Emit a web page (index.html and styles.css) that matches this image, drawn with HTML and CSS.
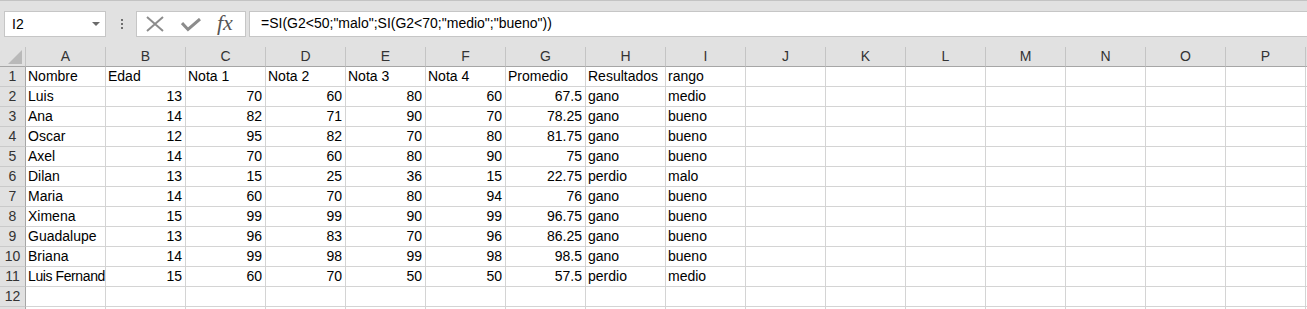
FILE: index.html
```html
<!DOCTYPE html>
<html lang="es">
<head>
<meta charset="utf-8">
<title>Hoja de cálculo</title>
<link rel="stylesheet" href="styles.css">
</head>
<body>
<div class="app">
  <div class="formula-bar">
    <div class="namebox"><span class="ref">I2</span><span class="dd"></span></div>
    <div class="grip"><i></i><i></i><i></i></div>
    <div class="fbtns">
      <svg class="ico-x" width="18" height="16" viewBox="0 0 18 16"><path d="M1 1 L17 15 M17 1 L1 15" stroke="#8c8c8c" stroke-width="2" fill="none"/></svg>
      <svg class="ico-ok" width="20" height="14" viewBox="0 0 20 14"><path d="M1 5 L7 11.5 L19 1" stroke="#8c8c8c" stroke-width="3" fill="none"/></svg>
      <span class="fx">fx</span>
    </div>
    <div class="finput">=SI(G2&lt;50;"malo";SI(G2&lt;70;"medio";"bueno"))</div>
  </div>
  <div class="sheet">
    <div class="row head"><div class="corner"><svg width="14" height="14" viewBox="0 0 14 14"><polygon points="14,0 14,14 0,14" fill="#b9b9b9"/></svg></div><div class="ch">A</div><div class="ch">B</div><div class="ch">C</div><div class="ch">D</div><div class="ch">E</div><div class="ch">F</div><div class="ch">G</div><div class="ch">H</div><div class="ch">I</div><div class="ch">J</div><div class="ch">K</div><div class="ch">L</div><div class="ch">M</div><div class="ch">N</div><div class="ch">O</div><div class="ch">P</div><div class="ch"></div></div>
    <div class="row"><div class="rh">1</div><div class="c">Nombre</div><div class="c">Edad</div><div class="c">Nota 1</div><div class="c">Nota 2</div><div class="c">Nota 3</div><div class="c">Nota 4</div><div class="c">Promedio</div><div class="c">Resultados</div><div class="c">rango</div><i></i><i></i><i></i><i></i><i></i><i></i><i></i><i></i></div>
    <div class="row"><div class="rh">2</div><div class="c">Luis</div><div class="c n">13</div><div class="c n">70</div><div class="c n">60</div><div class="c n">80</div><div class="c n">60</div><div class="c n">67.5</div><div class="c">gano</div><div class="c">medio</div><i></i><i></i><i></i><i></i><i></i><i></i><i></i><i></i></div>
    <div class="row"><div class="rh">3</div><div class="c">Ana</div><div class="c n">14</div><div class="c n">82</div><div class="c n">71</div><div class="c n">90</div><div class="c n">70</div><div class="c n">78.25</div><div class="c">gano</div><div class="c">bueno</div><i></i><i></i><i></i><i></i><i></i><i></i><i></i><i></i></div>
    <div class="row"><div class="rh">4</div><div class="c">Oscar</div><div class="c n">12</div><div class="c n">95</div><div class="c n">82</div><div class="c n">70</div><div class="c n">80</div><div class="c n">81.75</div><div class="c">gano</div><div class="c">bueno</div><i></i><i></i><i></i><i></i><i></i><i></i><i></i><i></i></div>
    <div class="row"><div class="rh">5</div><div class="c">Axel</div><div class="c n">14</div><div class="c n">70</div><div class="c n">60</div><div class="c n">80</div><div class="c n">90</div><div class="c n">75</div><div class="c">gano</div><div class="c">bueno</div><i></i><i></i><i></i><i></i><i></i><i></i><i></i><i></i></div>
    <div class="row"><div class="rh">6</div><div class="c">Dilan</div><div class="c n">13</div><div class="c n">15</div><div class="c n">25</div><div class="c n">36</div><div class="c n">15</div><div class="c n">22.75</div><div class="c">perdio</div><div class="c">malo</div><i></i><i></i><i></i><i></i><i></i><i></i><i></i><i></i></div>
    <div class="row"><div class="rh">7</div><div class="c">Maria</div><div class="c n">14</div><div class="c n">60</div><div class="c n">70</div><div class="c n">80</div><div class="c n">94</div><div class="c n">76</div><div class="c">gano</div><div class="c">bueno</div><i></i><i></i><i></i><i></i><i></i><i></i><i></i><i></i></div>
    <div class="row"><div class="rh">8</div><div class="c">Ximena</div><div class="c n">15</div><div class="c n">99</div><div class="c n">99</div><div class="c n">90</div><div class="c n">99</div><div class="c n">96.75</div><div class="c">gano</div><div class="c">bueno</div><i></i><i></i><i></i><i></i><i></i><i></i><i></i><i></i></div>
    <div class="row"><div class="rh">9</div><div class="c">Guadalupe</div><div class="c n">13</div><div class="c n">96</div><div class="c n">83</div><div class="c n">70</div><div class="c n">96</div><div class="c n">86.25</div><div class="c">gano</div><div class="c">bueno</div><i></i><i></i><i></i><i></i><i></i><i></i><i></i><i></i></div>
    <div class="row"><div class="rh">10</div><div class="c">Briana</div><div class="c n">14</div><div class="c n">99</div><div class="c n">98</div><div class="c n">99</div><div class="c n">98</div><div class="c n">98.5</div><div class="c">gano</div><div class="c">bueno</div><i></i><i></i><i></i><i></i><i></i><i></i><i></i><i></i></div>
    <div class="row"><div class="rh">11</div><div class="c tight">Luis Fernand</div><div class="c n">15</div><div class="c n">60</div><div class="c n">70</div><div class="c n">50</div><div class="c n">50</div><div class="c n">57.5</div><div class="c">perdio</div><div class="c">medio</div><i></i><i></i><i></i><i></i><i></i><i></i><i></i><i></i></div>
    <div class="row"><div class="rh">12</div><div class="c"></div><div class="c"></div><div class="c"></div><div class="c"></div><div class="c"></div><div class="c"></div><div class="c"></div><div class="c"></div><div class="c"></div><i></i><i></i><i></i><i></i><i></i><i></i><i></i><i></i></div>
    <div class="row"><div class="rh"></div><div class="c"></div><div class="c"></div><div class="c"></div><div class="c"></div><div class="c"></div><div class="c"></div><div class="c"></div><div class="c"></div><div class="c"></div><i></i><i></i><i></i><i></i><i></i><i></i><i></i><i></i></div>
  </div>
</div>
</body>
</html>
```

FILE: styles.css
```css
html, body {
  margin: 0;
  padding: 0;
}
body {
  width: 1307px;
  height: 309px;
  overflow: hidden;
  background: #e1e1e1;
  font-family: "Liberation Sans", Arial, sans-serif;
  font-size: 14px;
  color: #000;
}
.app {
  width: 1307px;
  height: 309px;
  overflow: hidden;
}
.formula-bar {
  display: flex;
  align-items: center;
  border-top: 1px solid #c3c3c3;
  padding: 10px 0 10px 4px;
  height: 26px;
}
.namebox {
  flex: none;
  box-sizing: border-box;
  width: 102px;
  height: 26px;
  border: 1px solid #c6c6c6;
  background: #fff;
  display: flex;
  align-items: center;
  justify-content: space-between;
  padding: 0 5px 0 7px;
}
.ref {
  line-height: 19px;
}
.dd {
  width: 0;
  height: 0;
  border-left: 4px solid transparent;
  border-right: 4px solid transparent;
  border-top: 4px solid #6a6a6a;
}
.grip {
  flex: none;
  display: flex;
  flex-direction: column;
  gap: 2px;
  margin-left: 15px;
  width: 2px;
}
.grip i {
  display: block;
  width: 2px;
  height: 2px;
  background: #6e6e6e;
}
.fbtns {
  flex: none;
  box-sizing: border-box;
  width: 110px;
  height: 26px;
  margin-left: 13px;
  border: 1px solid #c6c6c6;
  background: #fff;
  display: flex;
  align-items: center;
  padding-left: 9px;
}
.ico-x {
  display: block;
  margin-top: -1px;
}
.ico-ok {
  display: block;
  margin-left: 17px;
  margin-top: 2px;
}
.fx {
  margin-left: 16px;
  font-family: "Liberation Serif", "Times New Roman", serif;
  font-style: italic;
  font-size: 22px;
  line-height: 22px;
  color: #555;
  margin-top: -3px;
}
.finput {
  flex: none;
  box-sizing: border-box;
  width: 1100px;
  height: 26px;
  margin-left: 3px;
  border: 1px solid #c6c6c6;
  background: #fff;
  padding-left: 11px;
  line-height: 23px;
  white-space: nowrap;
}
.sheet {
  background: #fff;
}
.row {
  display: grid;
  grid-template-columns: 26px repeat(17, 80px);
  height: 20px;
}
.row > * {
  box-sizing: border-box;
  border-right: 1px solid #d4d4d4;
  border-bottom: 1px solid #d4d4d4;
  overflow: hidden;
  white-space: nowrap;
  line-height: 19px;
}
.row.head {
  background: #e1e1e1;
}
.row.head > * {
  border-bottom: 1px solid #a6a6a6;
  border-right: 1px solid #c4c4c4;
}
.corner {
  display: flex;
  align-items: flex-end;
  justify-content: flex-end;
  padding: 0 3px 2px 0;
}
.corner svg {
  display: block;
}
.ch {
  text-align: center;
  color: #333;
  line-height: 19px;
}
.row > .rh {
  background: #e1e1e1;
  border-right: 1px solid #a6a6a6;
  border-bottom: 1px solid #cacaca;
  text-align: center;
  color: #333;
}
.c {
  padding: 0 3px 0 2px;
}
.c.tight {
  padding-right: 0;
  letter-spacing: -0.4px;
}
.c.n {
  text-align: right;
}
```
